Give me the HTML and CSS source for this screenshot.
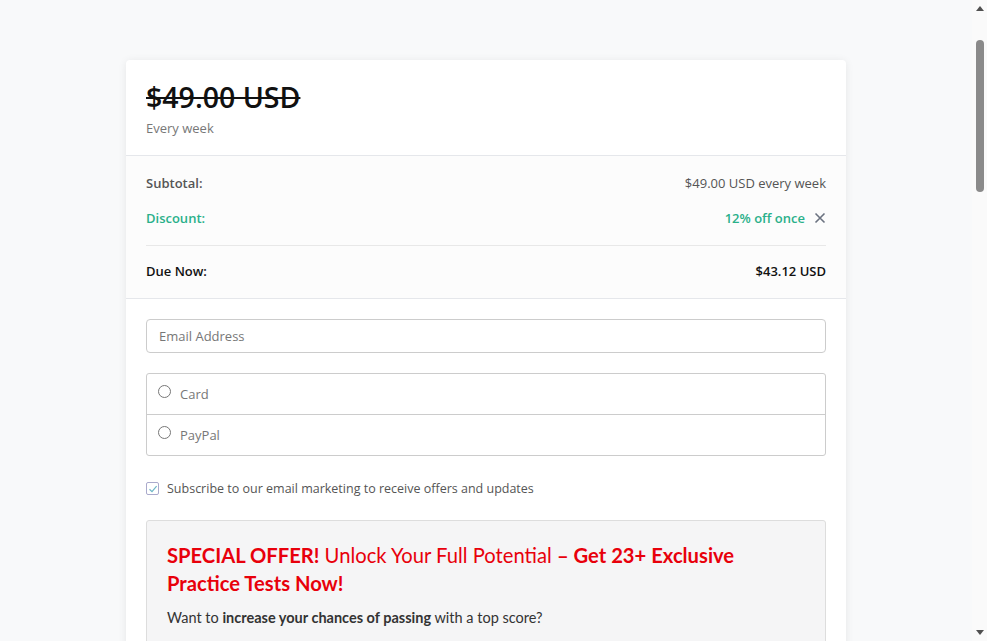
FILE: index.html
```html
<!DOCTYPE html>
<html>
<head>
<meta charset="utf-8">
<link rel="stylesheet" href="styles.css">
</head>
<body>
<main class="card">
  <header class="head">
    <div class="price">$49.00 USD</div>
    <div class="period">Every week</div>
  </header>
  <section class="summary">
    <div class="row">
      <span class="lbl">Subtotal:</span>
      <span class="val">$49.00 USD every week</span>
    </div>
    <div class="row discount">
      <span class="lbl">Discount:</span>
      <span class="val">12% off once
        <svg class="x" width="12" height="12" viewBox="0 0 12 12"><path d="M1.5 1.5L10.5 10.5M10.5 1.5L1.5 10.5" stroke="#6b7280" stroke-width="1.6" fill="none"/></svg>
      </span>
    </div>
    <div class="row due">
      <span class="lbl">Due Now:</span>
      <span class="val">$43.12 USD</span>
    </div>
  </section>
  <section class="form">
    <div class="input">Email Address</div>
    <div class="methods">
      <label class="method"><span class="radio"></span>Card</label>
      <label class="method"><span class="radio"></span>PayPal</label>
    </div>
    <label class="check">
      <span class="box"><svg width="10" height="10" viewBox="0 0 10 10"><path d="M1.5 5.2L4 7.6L8.6 2.2" stroke="#6fb7c7" stroke-width="1.2" fill="none"/></svg></span>
      Subscribe to our email marketing to receive offers and updates
    </label>
    <div class="offer">
      <h2 class="offer-title"><b>SPECIAL OFFER!</b> Unlock Your Full Potential <b>– Get 23+ Exclusive Practice Tests Now!</b></h2>
      <p class="offer-text">Want to <b>increase your chances of passing</b> with a top score?</p>
      <p class="offer-text">Add our exclusive bundle of practice tests to your order today.</p>
      <p class="offer-text">Realistic questions, detailed explanations and instant results.</p>
    </div>
  </section>
</main>
<div class="scrollbar">
  <span class="arrow up"></span>
  <span class="thumb"></span>
  <span class="arrow down"></span>
</div>
</body>
</html>
```
FILE: styles.css
```css
html, body { margin: 0; padding: 0; }
body {
  background: #f8f9fa;
  font-family: "Open Sans", "Noto Sans", sans-serif;
  color: #333;
  padding: 60px 15px 40px 0;
}
.card {
  width: 720px;
  margin: 0 auto;
  background: #fff;
  border-radius: 4px;
  box-shadow: 0 1px 8px rgba(0,0,0,0.08);
}
.head {
  padding: 19px 20px 18px;
  border-bottom: 1px solid #e5e7eb;
}
.price {
  font-size: 28.5px;
  font-weight: 600;
  color: #111;
  text-decoration: line-through;
  text-decoration-thickness: 2px;
  line-height: 36px;
}
.period {
  font-size: 13px;
  color: #777;
  line-height: 18px;
  margin-top: 4px;
}
.summary {
  background: #fcfcfc;
  padding: 17px 20px 0;
  border-bottom: 1px solid #e5e7eb;
}
.row {
  display: flex;
  justify-content: space-between;
  align-items: center;
  font-size: 13px;
  line-height: 20px;
  margin-bottom: 15px;
}
.row .lbl { font-weight: 600; color: #555; }
.row .val { color: #555; display: flex; align-items: center; }
.discount { margin-bottom: 17px; }
.discount .lbl, .discount .val { color: #2ab08a; font-weight: 600; }
.x { margin-left: 9px; }
.due {
  border-top: 1px solid #e8e8e8;
  padding: 15px 0 17px;
  margin-bottom: 0;
}
.due .lbl, .due .val { color: #111; font-weight: 600; }
.form { padding: 20px 20px 20px; }
.input {
  height: 32px;
  border: 1px solid #ccc;
  border-radius: 4px;
  padding: 0 12px;
  display: flex;
  align-items: center;
  font-size: 13px;
  color: #777;
}
.methods {
  margin-top: 20px;
  border: 1px solid #ccc;
  border-radius: 3px;
}
.method {
  display: flex;
  align-items: center;
  height: 40px;
  padding: 0 11px;
  font-size: 13px;
  color: #777;
}
.method + .method { border-top: 1px solid #ccc; height: 40px; }
.radio {
  width: 11px;
  height: 11px;
  border: 1px solid #777;
  border-radius: 50%;
  margin-right: 9px;
  position: relative;
  top: -3px;
}
.check {
  display: flex;
  align-items: center;
  margin-top: 24px;
  font-size: 12.5px;
  color: #555;
}
.box {
  width: 11px;
  height: 11px;
  border: 1px solid #aac;
  border-radius: 2px;
  margin-right: 8px;
  display: flex;
  align-items: center;
  justify-content: center;
}
.offer {
  margin-top: 23px;
  background: #f5f5f6;
  border: 1px solid #ddd;
  border-radius: 3px;
  padding: 20px 20px 30px;
}
.offer-title {
  font-family: Lato, "Open Sans", sans-serif;
  font-size: 20.2px;
  font-weight: 400;
  line-height: 28px;
  color: #e8000b;
  margin: 0 0 12px;
}
.offer-title b { font-weight: 700; }
.offer-text {
  font-family: Lato, "Open Sans", sans-serif;
  font-size: 14.5px;
  color: #333;
  margin: 0 0 14px;
}
.scrollbar {
  position: fixed;
  top: 0;
  right: 0;
  bottom: 0;
  width: 15px;
  background: #fafafa;
}
.thumb {
  position: absolute;
  left: 4px;
  top: 40px;
  width: 8px;
  height: 152px;
  border-radius: 4px;
  background: #8a8a8a;
}
.arrow {
  position: absolute;
  left: 4px;
  width: 0;
  height: 0;
  border-left: 4px solid transparent;
  border-right: 4px solid transparent;
}
.arrow.up { top: 6px; border-bottom: 5px solid #505050; }
.arrow.down { bottom: 6px; border-top: 5px solid #505050; }
```
